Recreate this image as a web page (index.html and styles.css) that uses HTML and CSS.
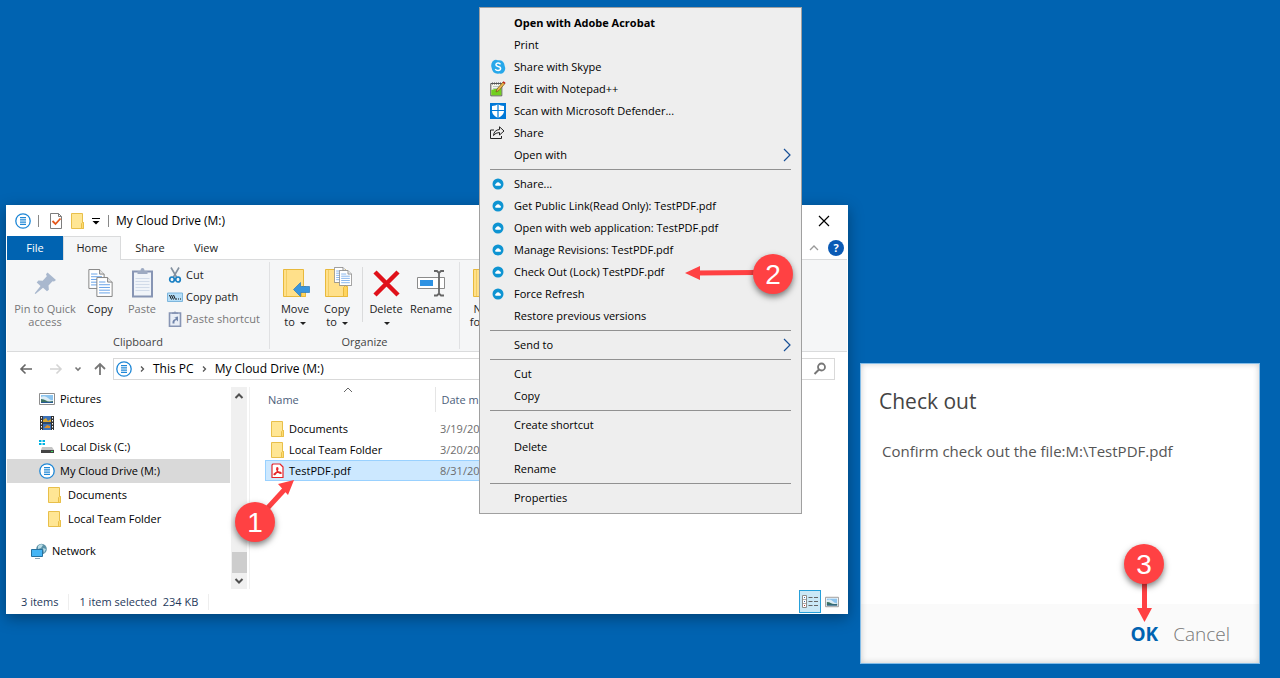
FILE: index.html
```html
<!DOCTYPE html>
<html lang="en">

<head>
    <meta charset="UTF-8">
    <meta name="viewport" content="width=device-width, initial-scale=1.0">
    <title>My Cloud Drive (M:)</title>
    <link rel="stylesheet" href="styles.css">
</head>

<body>
    <!-- Shared icons -->
    <svg class="sprite" aria-hidden="true">
        <symbol id="i-drive" viewBox="0 0 16 16">
            <circle cx="8" cy="8" r="7.200" fill="#fff" stroke="#1e87d6" stroke-width="1.300"/>
            <path d="M5 4.700h6M5 6.900h6M5 9.100h6M5 11.300h6" stroke="#1e87d6" stroke-width="1.300"/>
        </symbol>
        <symbol id="i-folder" viewBox="0 0 16 16">
            <path d="M1.500.5h11v9h1v6h-12z" fill="#ffe694" stroke="#e8bf4a"/>
            <path d="M11.500 15.500v-5l1-1h1v6z" fill="#ffdc70" stroke="#e8bf4a"/>
        </symbol>
        <symbol id="i-bigfolder" viewBox="0 0 32 32">
            <path d="M4.500 2.500h20v17h2v10h-22z" fill="#ffe08a" stroke="#e8b93c"/>
            <path d="M7.500 3v26" stroke="#f3cd62"/>
            <path d="M22.500 29.500v-9l2-2 2 2v9z" fill="#ffd45e" stroke="#e8b93c"/>
        </symbol>
        <symbol id="i-page" viewBox="0 0 18 22">
            <path d="M.6.6h11.800l5 5v15.800H.6z" fill="#fff" stroke="#7a7a7a"/>
            <path d="M12.400.6v5h5" fill="#e6e6e6" stroke="#7a7a7a"/>
            <path d="M3 5.500h7M3 8.500h12M3 11.500h12M3 14.500h12M3 17.500h12" stroke="#5a9be6"/>
        </symbol>
        <symbol id="i-cloud" viewBox="0 0 16 16">
            <circle cx="8" cy="8" r="5.500" fill="#0e94d2"/>
            <path d="M5.700 9.700a1.100 1.100 0 0 1 .2-2 2.200 2.200 0 0 1 4-.2 1.200 1.200 0 0 1 .5 2.200z" fill="#fff"/>
        </symbol>
        <symbol id="i-picture" viewBox="0 0 16 14">
            <path d="M.5 1.500h15v11H.5z" fill="#fff" stroke="#8e8e8e"/>
            <path d="M2 3h12v8H2z" fill="#8cc4ee"/>
            <path d="M2 5q4-2 7 1t5 2v3H2z" fill="#dcecf5"/>
            <path d="M2 7q3 0 5 1.500t7 .5v2H2z" fill="#3d7261"/>
            <path d="M2 10h12v1H2z" fill="#285b94"/>
        </symbol>
    </svg>

    <main class="desktop">
        <section class="window" aria-label="My Cloud Drive (M:)">
            <header class="titlebar">
                <svg class="icon"><use href="#i-drive"/></svg>
                <span class="tick"></span>
                <button class="quick" aria-label="Properties">
                    <svg class="icon" viewBox="0 0 16 16">
                        <path d="M2.500.5h8l3 3v12h-11z" fill="#fff" stroke="#7d7d7d"/>
                        <path d="M10.500.5v3h3" fill="none" stroke="#7d7d7d"/>
                        <path d="M4.500 8l3 3 5-5.500" fill="none" stroke="#e4581c" stroke-width="1.800"/>
                    </svg>
                </button>
                <button class="quick" aria-label="New folder"><svg class="icon"><use href="#i-folder"/></svg></button>
                <button class="customize" aria-label="Customize">
                    <svg width="8" height="8" viewBox="0 0 8 8"><path d="M0 1.500h8" stroke="#000"/><path d="M.5 4h7L4 7.500z"/></svg>
                </button>
                <span class="tick"></span>
                <h1>My Cloud Drive (M:)</h1>
                <button class="close" aria-label="Close">
                    <svg width="12" height="12" viewBox="0 0 12 12"><path d="M1 1l10 10M11 1L1 11" stroke="#000" stroke-width="1.200"/></svg>
                </button>
            </header>

            <nav class="tabs">
                <button class="tab file">File</button>
                <button class="tab active">Home</button>
                <button class="tab">Share</button>
                <button class="tab view-tab">View</button>
                <button class="collapse" aria-label="Minimize ribbon">
                    <svg width="10" height="6" viewBox="0 0 10 6"><path d="M1 5l4-4 4 4" fill="none" stroke="#999" stroke-width="1.300"/></svg>
                </button>
                <button class="help" aria-label="Help">?</button>
            </nav>

            <div class="ribbon">
                <section class="group">
                    <div class="tools">
                        <button class="tool pin" disabled>
                            <svg class="big" viewBox="0 0 32 32"><path d="M18.500 5.500l8.500 7.500-2 1.500-1.500-.3-4 4.300.4 4.300-1.900 1.500-4-3.500L6.500 27l-.8-.8 5.800-7.300-3.800-3.400 1.700-2 4.300.2 4.100-4.400-.8-2z" fill="#a9b8ce"/></svg>
                            <span>Pin to Quick access</span>
                        </button>
                        <button class="tool">
                            <svg class="big" viewBox="0 0 32 32"><use href="#i-page" x="4" y="2" width="17" height="20"/><use href="#i-page" x="12" y="10" width="17" height="20"/></svg>
                            <span>Copy</span>
                        </button>
                        <button class="tool" disabled>
                            <svg class="big" viewBox="0 0 32 32">
                                <path d="M7 4.500h19v25H7z" fill="#f0f4f9" stroke="#8795b4" stroke-width="2"/>
                                <path d="M11.500 7V4h3q0-3 2-3t2 3h3v3z" fill="#9daac2"/>
                                <path d="M9.500 11.500h14M9.500 14.500h14M9.500 17.500h14M9.500 20.500h14M9.500 23.500h14" stroke="#d1dbe9"/>
                            </svg>
                            <span>Paste</span>
                        </button>
                        <div class="small-tools">
                            <button>
                                <svg class="icon" viewBox="0 0 16 16">
                                    <path d="M4 .5L9.500 10M12 .5L6.500 10" stroke="#8391a0" stroke-width="1.600"/>
                                    <ellipse cx="5" cy="12.500" rx="2.300" ry="2.500" fill="none" stroke="#1a80c4" stroke-width="1.700"/>
                                    <ellipse cx="11" cy="12.500" rx="2.300" ry="2.500" fill="none" stroke="#1a80c4" stroke-width="1.700"/>
                                </svg>
                                Cut
                            </button>
                            <button>
                                <svg class="icon" viewBox="0 0 16 16">
                                    <path d="M.5 4h15v8.500H.5z" fill="#b5def8" stroke="#7db6dd"/>
                                    <path d="M2.500 6l2 4.500M4.500 6l2 4.500M6.500 6l2 4.500" stroke="#111"/>
                                    <path d="M9 10h1M11 10h1M13 10h1" stroke="#111"/>
                                </svg>
                                Copy path
                            </button>
                            <button disabled>
                                <svg class="icon" viewBox="0 0 16 16">
                                    <path d="M2.500 2h11v13.300h-11z" fill="#e9eef6" stroke="#8795b4" stroke-width="1.600"/>
                                    <path d="M5 3V1.500h1.500q1.500-2 3 0H11V3z" fill="#8795b4"/>
                                    <path d="M5.500 12.500q-.5-4 3-4.500V6.500h-2L11 5.500v5L9.500 9q-2.500.5-2 3.500z" fill="#7185ab"/>
                                </svg>
                                Paste shortcut
                            </button>
                        </div>
                    </div>
                    <h2>Clipboard</h2>
                </section>

                <section class="group">
                    <div class="tools">
                        <button class="tool">
                            <svg class="big" viewBox="0 0 32 32"><use href="#i-bigfolder" width="32" height="32"/><path d="M14.500 22.500l7-7v4h9v6h-9v4z" fill="#3a96dd" stroke="#2979ba" stroke-width=".7"/></svg>
                            <span>Move<br>to <i class="caret"></i></span>
                        </button>
                        <button class="tool">
                            <svg class="big" viewBox="0 0 32 32"><use href="#i-bigfolder" width="32" height="32"/><use href="#i-page" x="13" y="0" width="13" height="16"/><use href="#i-page" x="18" y="3" width="13" height="16"/></svg>
                            <span>Copy<br>to <i class="caret"></i></span>
                        </button>
                        <span class="divider"></span>
                        <button class="tool">
                            <svg class="big" viewBox="0 0 32 32"><path d="M5 5l23 23M28 5L5 28" stroke="#e0111a" stroke-width="4.500"/></svg>
                            <span>Delete<br><i class="caret"></i></span>
                        </button>
                        <button class="tool rename">
                            <svg class="big" viewBox="0 0 32 32">
                                <path d="M2.500 10.500h27v11h-27z" fill="#fff" stroke="#8b8b8b"/>
                                <path d="M5 13h13v6H5z" fill="#2e92e3"/>
                                <path d="M24 6v21M19 4h3l2 2 2-2h3M19 28.500h3l2-2 2 2h3" fill="none" stroke="#666" stroke-width="1.800"/>
                            </svg>
                            <span>Rename</span>
                        </button>
                    </div>
                    <h2>Organize</h2>
                </section>

                <section class="group">
                    <div class="tools">
                        <button class="tool">
                            <svg class="big" viewBox="0 0 32 32"><use href="#i-bigfolder" width="32" height="32"/></svg>
                            <span>New<br>folder</span>
                        </button>
                    </div>
                    <h2>New</h2>
                </section>
            </div>

            <div class="location">
                <button aria-label="Back"><svg class="icon" viewBox="0 0 16 16"><path d="M14 8H3M7.500 3.500L3 8l4.500 4.500" fill="none" stroke="#666" stroke-width="1.600"/></svg></button>
                <button class="forward" aria-label="Forward" disabled><svg class="icon" viewBox="0 0 16 16"><path d="M2 8h11M8.500 3.500L13 8l-4.500 4.500" fill="none" stroke="#d4d4d4" stroke-width="1.600"/></svg></button>
                <button aria-label="Recent"><svg width="8" height="6" viewBox="0 0 8 6"><path d="M1.500 1.500L4 4l2.500-2.500" fill="none" stroke="#777" stroke-width="1.600"/></svg></button>
                <button aria-label="Up"><svg class="icon" viewBox="0 0 16 16"><path d="M8 14V3M3 8l5-5 5 5" fill="none" stroke="#777" stroke-width="1.800"/></svg></button>
                <div class="address">
                    <svg class="icon"><use href="#i-drive"/></svg>
                    <svg class="crumb" viewBox="0 0 5 8"><path d="M1 1.500L3.500 4 1 6.500" fill="none" stroke="#555" stroke-width="1.300"/></svg>
                    <a href="#">This PC</a>
                    <svg class="crumb" viewBox="0 0 5 8"><path d="M1 1.500L3.500 4 1 6.500" fill="none" stroke="#555" stroke-width="1.300"/></svg>
                    <a href="#">My Cloud Drive (M:)</a>
                </div>
                <label class="search">
                    <input type="search" aria-label="Search My Cloud Drive (M:)">
                    <svg class="icon" viewBox="0 0 16 16"><circle cx="9.500" cy="6" r="3.500" fill="none" stroke="#777" stroke-width="1.800"/><path d="M7 8.500l-4.500 4.500" stroke="#777" stroke-width="2"/></svg>
                </label>
            </div>

            <div class="content">
                <nav class="tree">
                    <a href="#"><svg class="icon"><use href="#i-picture"/></svg>Pictures</a>
                    <a href="#">
                        <svg class="icon" viewBox="0 0 16 16">
                            <path d="M1 1h14v14H1z" fill="#333"/>
                            <path d="M4 1h8v14H4z" fill="#3d72b8"/>
                            <path d="M4 5l3-2 2 3 3-2v3H4z" fill="#dba72d"/>
                            <path d="M4 8h8" stroke="#222"/>
                            <path d="M5 13l3-3 3 1v2z" fill="#d9912d"/>
                            <path d="M2.500 2v13M13.500 2v13" stroke="#fff" stroke-dasharray="1.500 1.500"/>
                        </svg>
                        Videos
                    </a>
                    <a href="#">
                        <svg class="icon" viewBox="0 0 16 16">
                            <path d="M0 1h2.500v2H0zM3.500 1H6v2H3.500zM0 4h2.500v2H0zM3.500 4H6v2H3.500z" fill="#00b4e4"/>
                            <path d="M3 8h10l2 3H2z" fill="#c5c5c5"/>
                            <path d="M2 11h13v3H2z" fill="#444"/>
                            <path d="M12 12.500h2" stroke="#3fdc5f"/>
                        </svg>
                        Local Disk (C:)
                    </a>
                    <a href="#" class="selected"><svg class="icon"><use href="#i-drive"/></svg>My Cloud Drive (M:)</a>
                    <a href="#" class="child"><svg class="icon"><use href="#i-folder"/></svg>Documents</a>
                    <a href="#" class="child"><svg class="icon"><use href="#i-folder"/></svg>Local Team Folder</a>
                    <a href="#" class="root">
                        <svg class="icon" viewBox="0 0 16 16">
                            <circle cx="10.500" cy="6" r="5.300" fill="#5b92a8"/>
                            <path d="M7 3q3-3 5-1l-2 3-3 1zM12 5l3 1-2 4z" fill="#b9dce6"/>
                            <path d="M.5 6.500h11v7H.5z" fill="#45b5f5" stroke="#27719f"/>
                            <path d="M4 15.500h5" stroke="#8ca5b5"/>
                        </svg>
                        Network
                    </a>
                </nav>
                <div class="scrollbar">
                    <svg width="10" height="8" viewBox="0 0 10 8"><path d="M1.500 6L5 2.500 8.500 6" fill="none" stroke="#505050" stroke-width="2"/></svg>
                    <span class="thumb"></span>
                    <svg width="10" height="8" viewBox="0 0 10 8"><path d="M1.500 2L5 5.500 8.500 2" fill="none" stroke="#505050" stroke-width="2"/></svg>
                </div>
                <div class="files">
                    <table>
                        <thead>
                            <tr>
                                <th class="name">Name<svg class="sort" viewBox="0 0 10 6"><path d="M1 5l4-4 4 4" fill="none" stroke="#666"/></svg></th>
                                <th>Date modified</th>
                            </tr>
                        </thead>
                        <tbody>
                            <tr>
                                <td><span class="entry"><svg class="icon"><use href="#i-folder"/></svg>Documents</span></td>
                                <td>3/19/2021</td>
                            </tr>
                            <tr>
                                <td><span class="entry"><svg class="icon"><use href="#i-folder"/></svg>Local Team Folder</span></td>
                                <td>3/20/2021</td>
                            </tr>
                            <tr class="selected">
                                <td>
                                    <span class="entry">
                                        <svg class="icon" viewBox="0 0 16 16">
                                            <path d="M3 1h7l3 3v10.500H2V2z" fill="#fff" stroke="#e5252a" stroke-width="1.200" stroke-linejoin="round"/>
                                            <path d="M7 4.500q1.200 0 .8 2.200-.8 3-2.600 4.700-1.400.6-1.200-.4 1.500-2 5.800-1.800 1.700.3 1.200 1.200-1.500.3-3.600-2.300-1.400-2.300-.4-3.600z" fill="none" stroke="#e5252a" stroke-width="1.200"/>
                                        </svg>
                                        TestPDF.pdf
                                    </span>
                                </td>
                                <td>8/31/2021</td>
                            </tr>
                        </tbody>
                    </table>
                </div>
            </div>

            <footer class="status">
                <span>3 items</span>
                <span>1 item selected&nbsp; 234 KB</span>
                <button class="view on" aria-label="Details">
                    <svg width="18" height="14" viewBox="0 0 18 14">
                        <path d="M1.500.5h4v12h-4z" fill="#fff" stroke="#8c8c8c"/>
                        <path d="M2 4.500h3M2 8.500h3" stroke="#aaa"/>
                        <path d="M3 2.500h1M3 6.500h1" stroke="#3b6ea8"/>
                        <path d="M3 10.500h1" stroke="#b33"/>
                        <path d="M7.500 2.500h4M13 2.500h4M7.500 6.500h4M13 6.500h4M7.500 10.500h4M13 10.500h4" stroke="#666"/>
                    </svg>
                </button>
                <button class="view" aria-label="Large icons"><svg width="14" height="12"><use href="#i-picture"/></svg></button>
            </footer>
        </section>

        <section class="dialog" role="dialog" aria-labelledby="dialogTitle">
            <div class="message">
                <h2 id="dialogTitle">Check out</h2>
                <p>Confirm check out the file:M:\TestPDF.pdf</p>
            </div>
            <footer>
                <button class="ok">OK</button>
                <button>Cancel</button>
            </footer>
        </section>

        <div class="menu">
            <button class="default">Open with Adobe Acrobat</button>
            <button>Print</button>
            <button>
                <svg class="icon" viewBox="0 0 16 16">
                    <path d="M4.500 1q2-.5 3.500.3 6-.6 6.700 5.700 1 2 .3 4-1.500 4.300-5.500 3.500Q2.500 15.500 1.700 9 .8 7 1.500 4.500 2.300 1.800 4.500 1z" fill="#28a8ea"/>
                    <path d="M10.500 5.300Q9.700 4 7.900 4.100 6 4.200 5.900 5.700q0 1.300 2.200 1.800 2.600.5 2.500 2.200-.2 1.800-2.500 1.900-2 0-2.800-1.600" fill="none" stroke="#fff" stroke-width="1.500"/>
                </svg>
                Share with Skype
            </button>
            <button>
                <svg class="icon" viewBox="0 0 16 16">
                    <path d="M.8 2.500h11v12.300H.8z" fill="#f6f6ec" stroke="#555"/>
                    <path d="M1.300 9l10-3v8.300h-10z" fill="#72cf1f"/>
                    <path d="M2 2.500h9" stroke="#555" stroke-width="2" stroke-dasharray="1 1"/>
                    <path d="M3 5.500h6M3 7.500h4" stroke="#bcc9c5"/>
                    <path d="M6 11l1-3 6-7 2 1.500-6 7z" fill="#e9b64c" stroke="#72531e" stroke-width=".7"/>
                    <path d="M12.500 1.500l1-1.300 2 1.500-1 1.300z" fill="#c3241d"/>
                </svg>
                Edit with Notepad++
            </button>
            <button>
                <svg class="icon" viewBox="0 0 16 16">
                    <path d="M0 0h16v16H0z" fill="#0078d7"/>
                    <path d="M8 1.300q2.500 1.700 6 1.700v5q0 4.200-6 7-6-2.800-6-7V3q3.500 0 6-1.700z" fill="#fff"/>
                    <path d="M8 1v14M1.500 7.500h13" stroke="#0078d7" stroke-width="1.200"/>
                </svg>
                Scan with Microsoft Defender...
            </button>
            <button>
                <svg class="icon" viewBox="0 0 16 16">
                    <path d="M4 5H.5v8.500h11V11" fill="none" stroke="#222"/>
                    <path d="M3.500 10.500q.5-5.500 6-6V1.800L14 6l-4.500 4V7.500q-4 0-6 3z" fill="none" stroke="#222" stroke-linejoin="round"/>
                </svg>
                Share
            </button>
            <button>Open with<svg class="sub" viewBox="0 0 8 14"><path d="M1 1l6 6-6 6" fill="none" stroke="#174f96" stroke-width="1.200"/></svg></button>
            <hr>
            <button><svg class="icon"><use href="#i-cloud"/></svg>Share...</button>
            <button><svg class="icon"><use href="#i-cloud"/></svg>Get Public Link(Read Only): TestPDF.pdf</button>
            <button><svg class="icon"><use href="#i-cloud"/></svg>Open with web application: TestPDF.pdf</button>
            <button><svg class="icon"><use href="#i-cloud"/></svg>Manage Revisions: TestPDF.pdf</button>
            <button><svg class="icon"><use href="#i-cloud"/></svg>Check Out (Lock) TestPDF.pdf</button>
            <button><svg class="icon"><use href="#i-cloud"/></svg>Force Refresh</button>
            <button>Restore previous versions</button>
            <hr>
            <button>Send to<svg class="sub" viewBox="0 0 8 14"><path d="M1 1l6 6-6 6" fill="none" stroke="#174f96" stroke-width="1.200"/></svg></button>
            <hr>
            <button>Cut</button>
            <button>Copy</button>
            <hr>
            <button>Create shortcut</button>
            <button>Delete</button>
            <button>Rename</button>
            <hr>
            <button>Properties</button>
        </div>

        <!-- Numbered step markers -->
        <svg class="marker step-1" viewBox="0 0 70 70">
            <path d="M28 33L50 9" stroke="#ff4143" stroke-width="5"/>
            <path d="M59 0L43 4l10 11z" fill="#ff4143"/>
            <circle cx="20" cy="42" r="20"/>
            <text x="20" y="52">1</text>
        </svg>
        <svg class="marker step-2" viewBox="0 0 110 40">
            <path d="M70 18.500l-58 .5" stroke="#ff4143" stroke-width="5"/>
            <path d="M0 19l15-7v14z" fill="#ff4143"/>
            <circle cx="88" cy="20" r="20"/>
            <text x="88" y="30">2</text>
        </svg>
        <svg class="marker step-3" viewBox="0 0 40 80">
            <path d="M20.500 38v28" stroke="#ff4143" stroke-width="5"/>
            <path d="M13 64h15l-7.500 14z" fill="#ff4143"/>
            <circle cx="20" cy="20" r="20"/>
            <text x="20" y="30">3</text>
        </svg>
    </main>
</body>

</html>
```

FILE: styles.css
```css
* {
    margin: 0;
    padding: 0;
    box-sizing: border-box;
}

body {
    font-family: "Open Sans", "Noto Sans", sans-serif;
    font-size: 11px;
    line-height: 16px;
    color: #000;
    background-color: #0063b1;
}

button {
    font: inherit;
    color: inherit;
    background: none;
    border: none;
}

a {
    color: inherit;
    text-decoration: none;
}

h1,
h2 {
    font-size: 11px;
    font-weight: normal;
}

svg {
    flex: none;
    display: block;
}

.sprite {
    position: absolute;
    width: 0;
    height: 0;
}

.icon {
    width: 16px;
    height: 16px;
}

.desktop {
    position: relative;
    min-height: 100vh;
    overflow: hidden;
}

/* Explorer window */
.window {
    position: absolute;
    top: 205px;
    left: 6px;
    right: 432px;
    display: flex;
    flex-direction: column;
    padding: 0 1px;
    background-color: #fff;
    box-shadow: 0 4px 14px rgba(0, 0, 0, 0.35);
}

.titlebar {
    display: flex;
    align-items: center;
    height: 31px;
    padding-left: 8px;
}

.titlebar h1 {
    flex: 1;
    margin-left: 7px;
    font-size: 12px;
}

.tick {
    width: 1px;
    height: 12px;
    margin-left: 7px;
    background-color: #888;
}

.quick {
    margin-left: 9px;
}

.quick + .quick {
    margin-left: 6px;
}

.customize {
    margin: 0 1px 0 6px;
}

.close {
    display: flex;
    align-items: center;
    justify-content: center;
    width: 46px;
    height: 30px;
}

.tabs {
    display: flex;
    align-items: center;
    height: 24px;
    border-bottom: 1px solid #dadbdc;
    color: #222;
}

.tab {
    width: 58px;
    height: 24px;
    border: 1px solid transparent;
    border-bottom: none;
}

.tab.file {
    width: 56px;
    color: #fff;
    background-color: #0063b1;
}

.tab.active {
    background-color: #f5f6f7;
    border-color: #dadbdc;
}

.tab.view-tab {
    width: 54px;
}

.collapse {
    margin-left: auto;
}

.help {
    width: 16px;
    height: 16px;
    margin: 0 3px 0 9px;
    border-radius: 50%;
    background-color: #0a5ab5;
    color: #fff;
    font-weight: bold;
}

.ribbon {
    display: flex;
    padding: 2px 0;
    background-color: #f5f6f7;
    border-bottom: 1px solid #dadbdc;
    color: #222;
}

.group {
    display: flex;
    flex-direction: column;
    padding: 0 4px;
    border-right: 1px solid #e0e1e3;
}

.group:last-child {
    min-width: 130px;
    border: none;
}

.group h2 {
    margin-top: auto;
    text-align: center;
    line-height: 14px;
    color: #444;
}

.tools {
    display: flex;
    height: 73px;
}

.tool {
    display: flex;
    flex-direction: column;
    align-items: center;
    gap: 3px;
    width: 42px;
    padding-top: 5px;
    line-height: 13px;
}

.tool.pin {
    width: 68px;
}

.tool.rename {
    width: 48px;
}

button:disabled {
    color: #777;
}

.big {
    width: 32px;
    height: 32px;
}

.caret {
    display: inline-block;
    margin-left: 2px;
    border: 3px solid transparent;
    border-top-color: #222;
    border-bottom: none;
    vertical-align: middle;
}

.small-tools {
    display: flex;
    flex-direction: column;
    width: 102px;
    padding: 2px 0 0 4px;
}

.small-tools button {
    display: flex;
    align-items: center;
    gap: 3px;
    height: 22px;
    white-space: nowrap;
}

.divider {
    width: 1px;
    height: 55px;
    margin: 5px 2px 0 4px;
    background-color: #dadbdc;
}

.location {
    display: flex;
    align-items: center;
    gap: 10px;
    height: 35px;
    padding: 0 12px 2px 11px;
}

.location .forward {
    margin-left: 4px;
}

.address,
.search {
    display: flex;
    align-items: center;
    height: 22px;
    border: 1px solid #d9d9d9;
}

.address {
    flex: 1;
    gap: 8px;
    margin-left: -5px;
    padding-left: 2px;
    font-size: 12px;
}

.crumb {
    width: 5px;
    height: 8px;
}

.search {
    width: 180px;
    padding-right: 6px;
}

.search input {
    flex: 1;
    min-width: 0;
    font: inherit;
    border: none;
    outline: none;
    background: none;
}

.content {
    display: flex;
    height: 202px;
}

.tree {
    width: 223px;
}

.tree a {
    display: flex;
    align-items: center;
    gap: 5px;
    height: 24px;
    padding-left: 32px;
}

.tree .selected {
    background-color: #d9d9d9;
}

.tree .child {
    padding-left: 40px;
}

.tree .root {
    margin-top: 8px;
    padding-left: 24px;
}

.scrollbar {
    display: flex;
    flex-direction: column;
    align-items: center;
    width: 16px;
    margin-left: 1px;
    padding: 5px 0 4px;
    background-color: #f0f0f0;
}

.thumb {
    width: 15px;
    height: 21px;
    margin: auto 0 4px;
    background-color: #cdcdcd;
}

.files {
    flex: 1;
    margin-left: 2px;
    padding: 0 60px 0 15px;
    border-left: 1px solid #f0f0f0;
}

table {
    width: 100%;
    border-collapse: collapse;
}

th {
    height: 25px;
    padding-left: 6px;
    font-weight: normal;
    text-align: left;
    color: #4c607a;
}

th.name {
    position: relative;
    width: 170px;
    padding-left: 3px;
    border-right: 1px solid #e5e5e5;
}

/* sort arrow sits over the column heading */
.sort {
    position: absolute;
    top: 0;
    left: 78px;
    width: 10px;
    height: 6px;
}

tbody::before {
    content: "";
    display: block;
    height: 6px;
}

td {
    height: 21px;
    padding-left: 5px;
    color: #6d6d6d;
}

tr.selected {
    background-color: #cce8ff;
    outline: 1px solid #99d1ff;
    outline-offset: -1px;
}

.entry {
    display: flex;
    align-items: center;
    gap: 3px;
    color: #000;
}

.status {
    display: flex;
    align-items: center;
    height: 25px;
    padding: 0 4px 0 14px;
    color: #1e395b;
}

.status span {
    margin-right: 10px;
    padding-right: 10px;
    border-right: 1px solid #eee;
}

.view {
    display: flex;
    align-items: center;
    justify-content: center;
    height: 23px;
    width: 22px;
}

.view.on {
    margin-left: auto;
    border: 1px solid #26a0da;
    background-color: #cbe8f6;
}

/* Context menu */
.menu {
    position: absolute;
    top: 7px;
    left: 479px;
    width: 323px;
    padding: 4px 10px;
    background-color: #eee;
    border: 1px solid #a0a0a0;
}

.menu button {
    display: flex;
    align-items: center;
    gap: 8px;
    width: 100%;
    height: 22px;
    padding-left: 24px;
}

.menu button:has(.icon) {
    padding-left: 0;
}

.menu .default {
    font-weight: bold;
}

.menu .sub {
    width: 8px;
    height: 14px;
    margin-left: auto;
}

.menu hr {
    margin: 3px 0;
    border: none;
    border-top: 1px solid #919191;
}

/* Check out dialog */
.dialog {
    position: absolute;
    top: 363px;
    right: 20px;
    display: flex;
    flex-direction: column;
    width: 400px;
    min-height: 301px;
    background-color: #fff;
    border: 1px solid #82bce8;
    box-shadow: inset 0 0 6px rgba(0, 0, 0, 0.2);
}

.message {
    flex: 1;
    padding: 21px 18px;
}

.dialog h2 {
    font-size: 21px;
    line-height: 32px;
    color: #444;
}

.dialog p {
    margin-top: 22px;
    padding-left: 3px;
    font-size: 15px;
    line-height: 24px;
    color: #555;
}

.dialog footer {
    display: flex;
    align-items: center;
    justify-content: flex-end;
    gap: 15px;
    height: 59px;
    padding-right: 29px;
    background-color: rgba(0, 0, 0, 0.02);
    font-size: 19px;
    font-weight: 300;
    color: #777;
}

.dialog .ok {
    font-weight: bold;
    color: #0063b1;
}

/* Step markers */
.marker {
    position: absolute;
    overflow: visible;
    pointer-events: none;
}

.marker circle {
    fill: #ff4143;
    filter: drop-shadow(0 3px 3px rgba(0, 0, 0, 0.5));
}

.marker text {
    font-family: "Liberation Sans", sans-serif;
    font-size: 28px;
    text-anchor: middle;
    fill: #fff;
}

.step-1 {
    top: 480px;
    left: 235px;
    width: 70px;
    height: 70px;
}

.step-2 {
    top: 254px;
    left: 685px;
    width: 110px;
    height: 40px;
}

.step-3 {
    top: 544px;
    left: 1124px;
    width: 40px;
    height: 80px;
}
```
